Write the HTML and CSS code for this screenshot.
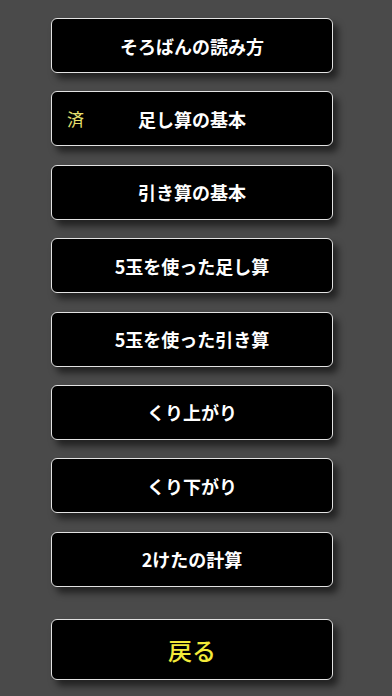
FILE: index.html
```html
<!DOCTYPE html>
<html lang="ja">
<head>
<meta charset="utf-8">
<title>メニュー</title>
<link rel="stylesheet" href="styles.css">
</head>
<body>
<main class="menu">
  <div class="btn"><span class="label">そろばんの読み方</span></div>
  <div class="btn"><span class="done">済</span><span class="label">足し算の基本</span></div>
  <div class="btn"><span class="label">引き算の基本</span></div>
  <div class="btn"><span class="label">5玉を使った足し算</span></div>
  <div class="btn"><span class="label">5玉を使った引き算</span></div>
  <div class="btn"><span class="label">くり上がり</span></div>
  <div class="btn"><span class="label">くり下がり</span></div>
  <div class="btn"><span class="label">2けたの計算</span></div>
  <div class="btn back"><span class="label back-label">戻る</span></div>
</main>
</body>
</html>
```
FILE: styles.css
```css
html, body {
  margin: 0;
  padding: 0;
  background: #4a4a4a;
  height: 100%;
  overflow: hidden;
}
body {
  font-family: "Noto Sans CJK JP", "Noto Sans", sans-serif;
}
.menu {
  display: flex;
  flex-direction: column;
  gap: 18.4px;
  padding: 18px 0 0 51px;
}
.btn {
  position: relative;
  box-sizing: border-box;
  width: 282px;
  height: 55px;
  background: #000;
  border: 1.5px solid #e2e2e2;
  border-radius: 6px;
  box-shadow: 5px 6px 7px rgba(0, 0, 0, 0.55);
  display: flex;
  align-items: center;
  justify-content: center;
}
.label {
  color: #fff;
  font-size: 18px;
  font-weight: 700;
  line-height: 1;
}
.done {
  position: absolute;
  left: 15px;
  top: 50%;
  transform: translateY(-52%);
  color: #e6e070;
  font-size: 17px;
  font-weight: 400;
  line-height: 1;
}
.back {
  height: 61px;
  margin-top: 14px;
}
.back-label {
  color: #f3ea3a;
  font-size: 24px;
  font-weight: 500;
}
```
